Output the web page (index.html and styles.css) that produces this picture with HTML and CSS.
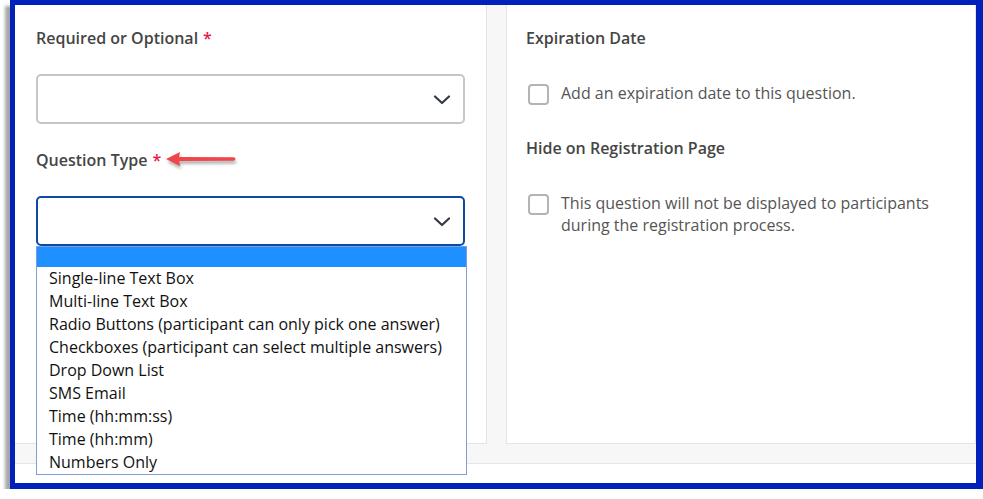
FILE: index.html
```html
<!DOCTYPE html>
<html lang="en">
<head>
<meta charset="utf-8">
<title>Question settings</title>
<link rel="stylesheet" href="styles.css">
</head>
<body>
<div class="frame">
  <div class="panels">
    <section class="card card-left">
      <div class="label">Required or Optional <span class="req">*</span></div>
      <div class="select">
        <svg class="chev" width="18" height="10" viewBox="0 0 18 10"><path d="M2 1.5 L9 8 L16 1.5" fill="none" stroke="#333a42" stroke-width="2.2" stroke-linecap="round" stroke-linejoin="round"/></svg>
      </div>
      <div class="label">Question Type <span class="req">*</span><svg class="arrow" width="80" height="22" viewBox="0 0 80 22">
          <defs><filter id="sh" x="-20%" y="-50%" width="140%" height="200%"><feGaussianBlur stdDeviation="1.6"/></filter></defs>
          <g filter="url(#sh)" opacity="0.45" transform="translate(1 3)">
            <path d="M2 9 L16 2 L15 7 L70 7.3 Q73 9 70 10.7 L15 11 L16 16 Z" fill="#555"/>
          </g>
          <path d="M2 9 L16 2 L15 7 L70 7.3 Q73 9 70 10.7 L15 11 L16 16 Z" fill="#f0454a"/>
        </svg></div>
      <div class="select-wrap">
        <div class="select focused">
          <svg class="chev" width="18" height="10" viewBox="0 0 18 10"><path d="M2 1.5 L9 8 L16 1.5" fill="none" stroke="#333a42" stroke-width="2.2" stroke-linecap="round" stroke-linejoin="round"/></svg>
        </div>
        <ul class="options">
          <li class="opt selected">&nbsp;</li>
          <li class="opt">Single-line Text Box</li>
          <li class="opt">Multi-line Text Box</li>
          <li class="opt">Radio Buttons (participant can only pick one answer)</li>
          <li class="opt">Checkboxes (participant can select multiple answers)</li>
          <li class="opt">Drop Down List</li>
          <li class="opt">SMS Email</li>
          <li class="opt">Time (hh:mm:ss)</li>
          <li class="opt">Time (hh:mm)</li>
          <li class="opt">Numbers Only</li>
        </ul>
      </div>
    </section>
    <section class="card card-right">
      <div class="label">Expiration Date</div>
      <div class="check-row">
        <span class="box"></span>
        <span class="check-text">Add an expiration date to this question.</span>
      </div>
      <div class="label">Hide on Registration Page</div>
      <div class="check-row">
        <span class="box"></span>
        <span class="check-text">This question will not be displayed to participants<br>during the registration process.</span>
      </div>
    </section>
  </div>
  <div class="footer"></div>
</div>
</body>
</html>
```

FILE: styles.css
```css
* { box-sizing: border-box; }
html, body { margin: 0; padding: 0; background: #ffffff; }
body {
  font-family: "Open Sans", "Noto Sans", "Liberation Sans", sans-serif;
  font-size: 16px;
  color: #444;
  overflow: hidden;
}
.frame {
  margin-left: 10px;
  width: 973px;
  height: 489px;
  border-style: solid;
  border-color: #0022bb;
  border-width: 5px 7px 6px 5px;
  background: #ffffff;
  box-shadow: -5px 6px 3px rgba(0, 0, 0, 0.35);
  display: flex;
  flex-direction: column;
}
.panels {
  background: #f7f7f7;
  display: flex;
  gap: 19px;
  padding-bottom: 19px;
  height: 458px;
  flex: none;
}
.footer {
  flex: 1;
  border-top: 1px solid #e6e6e6;
  background: #ffffff;
}
.card {
  background: #ffffff;
  border: 1px solid #e4e4e4;
  border-top: none;
  padding-top: 21px;
}
.card-left {
  width: 472px;
  border-left: none;
  padding-left: 21px;
  padding-right: 21px;
}
.card-right {
  flex: 1;
  padding-left: 19px;
}
.label {
  font-weight: 600;
  line-height: 24px;
  color: #454545;
  display: flex;
  align-items: center;
  white-space: nowrap;
}
.req { color: #e8194a; margin-left: 5px; }
.arrow { margin-left: 3px; margin-top: 2px; }
.select {
  height: 50px;
  border: 2px solid #c6c6c6;
  border-radius: 5px;
  margin: 24px 0 24px;
  display: flex;
  align-items: center;
  justify-content: flex-end;
  padding-right: 12px;
  background: #fff;
}
.select.focused {
  border-color: #0e4aa3;
  height: 50px;
  margin: 0;
}
.chev { display: block; margin-top: 1px; }
.select-wrap {
  position: relative;
  margin-top: 24px;
}
.options {
  position: absolute;
  left: 0;
  top: 50px;
  width: 431px;
  margin: 0;
  padding: 0;
  list-style: none;
  background: #fff;
  border: 1px solid #7f9ed8;
  color: #111;
  z-index: 2;
}
.opt {
  height: 23px;
  line-height: 23px;
  padding-left: 12px;
  white-space: nowrap;
}
.opt.selected {
  background: #1e90ff;
  height: 20px;
}
.card-right .label + .check-row { margin-top: 32px; }
.check-row {
  display: flex;
  align-items: flex-start;
  margin-bottom: 31px;
  color: #555;
  line-height: 22px;
}
.box {
  flex: none;
  width: 21px;
  height: 21px;
  border: 2px solid #b4b4b4;
  border-radius: 4px;
  margin: 2px 12px 0 2px;
  background: #fff;
}
.check-text { color: #555; }
```
